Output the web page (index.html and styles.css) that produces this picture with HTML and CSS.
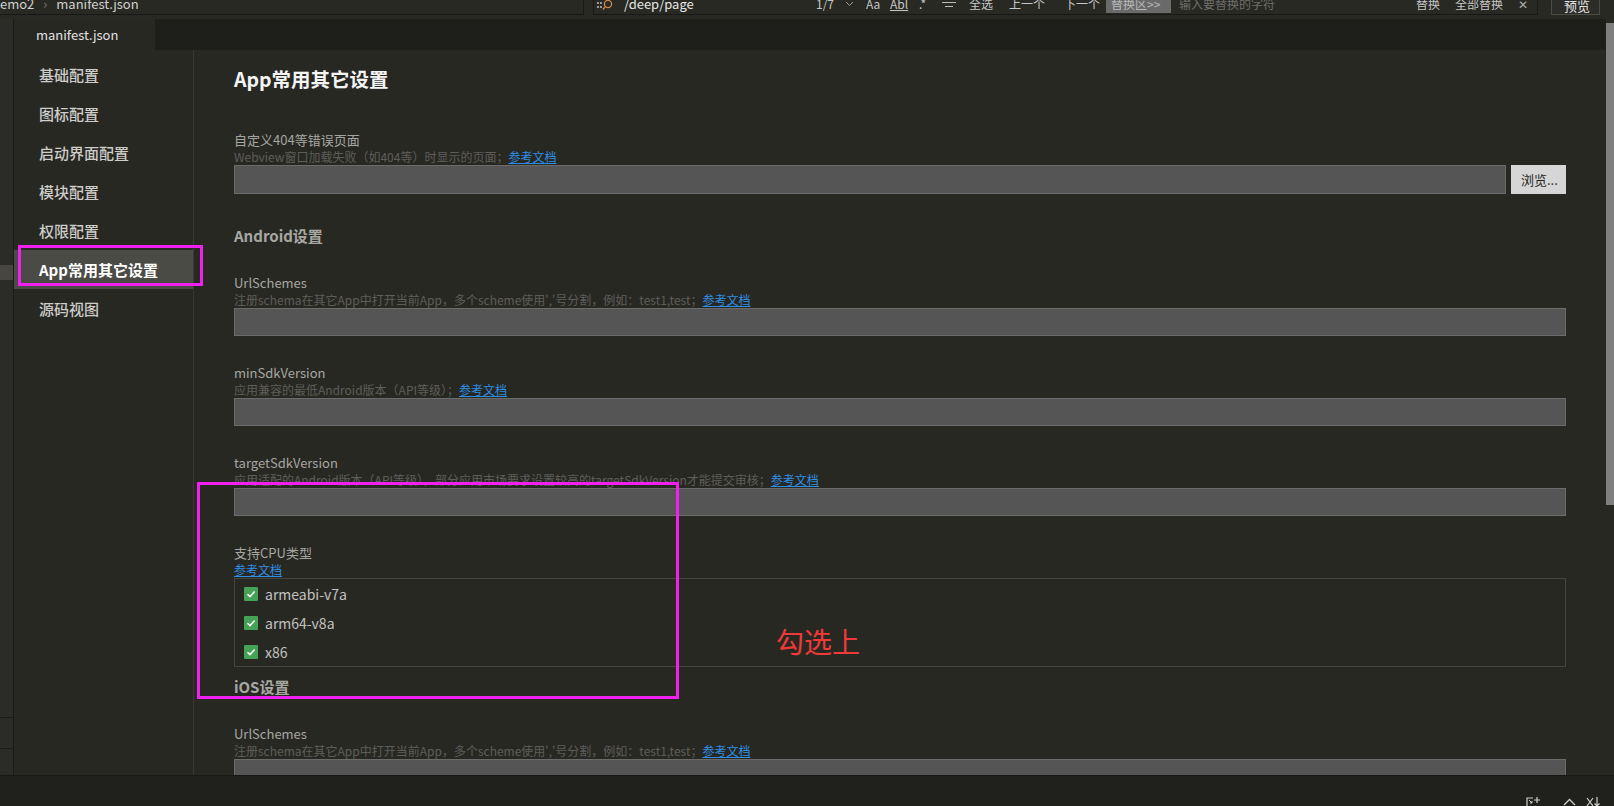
FILE: index.html
```html
<!DOCTYPE html>
<html lang="zh-CN">
<head>
<meta charset="utf-8">
<title>manifest.json</title>
<link rel="stylesheet" href="styles.css">
</head>
<body>
<div class="app">
  <header class="topbar">
    <div class="crumbs"><span>emo2</span><span class="sep">›</span><span>manifest.json</span></div>
    <div class="find">
      <svg class="find-ico" width="17" height="12" viewBox="0 0 17 12"><g fill="#9a9a9a"><rect x="0" y="3" width="2" height="2"/><rect x="3" y="3" width="2" height="2"/><rect x="0" y="7" width="2" height="2"/><rect x="3" y="7" width="2" height="2"/></g><circle cx="11" cy="5" r="3.6" fill="none" stroke="#d0884a" stroke-width="1.3"/><path d="M8.4 7.6 L6 10.5" stroke="#d0884a" stroke-width="1.4"/></svg>
      <span class="find-text">/deep/page</span>
      <span class="tool w29">1/7</span>
      <span class="tool w21"><svg width="9" height="6" viewBox="0 0 9 6"><path d="M1 1 L4.5 4.5 L8 1" fill="none" stroke="#999" stroke-width="1"/></svg></span>
      <span class="tool w24">Aa</span>
      <span class="tool w29 abl">Abl</span>
      <span class="tool w23">.*</span>
      <span class="tool w27"><svg width="14" height="10" viewBox="0 0 14 10"><path d="M0 3.5 H14 M3 7.5 H11" stroke="#bbb" stroke-width="1.2"/></svg></span>
      <span class="tool w40">全选</span>
      <span class="tool w55">上一个</span>
      <span class="tool w42">下一个</span>
      <span class="replace-tag">替换区&gt;&gt;</span>
      <span class="placeholder">输入要替换的字符</span>
      <span class="tool w39">替换</span>
      <span class="tool w63">全部替换</span>
      <span class="tool close">✕</span>
    </div>
    <div class="preview">预览</div>
  </header>

  <div class="main">
    <div class="rail">
      <div class="rail-top"></div>
      <div class="rail-hl"></div>
      <div class="rail-fill"></div>
      <div class="rail-cell"></div>
      <div class="rail-end"></div>
    </div>
    <div class="editor">
      <div class="editor-main">
        <div class="tabs"><div class="tab">manifest.json</div></div>
        <div class="panel">
          <nav class="side">
            <div class="side-item">基础配置</div>
            <div class="side-item">图标配置</div>
            <div class="side-item">启动界面配置</div>
            <div class="side-item">模块配置</div>
            <div class="side-item">权限配置</div>
            <div class="side-item active">App常用其它设置</div>
            <div class="side-item">源码视图</div>
          </nav>
          <section class="content">
            <h1 class="title">App常用其它设置</h1>

            <div class="field">
              <div class="label">自定义404等错误页面</div>
              <div class="hint">Webview窗口加载失败（如404等）时显示的页面；<a>参考文档</a></div>
              <div class="input-row">
                <div class="input tall"></div>
                <div class="browse">浏览...</div>
              </div>
            </div>

            <h2 class="section">Android设置</h2>

            <div class="field">
              <div class="label">UrlSchemes</div>
              <div class="hint">注册schema在其它App中打开当前App，多个scheme使用','号分割，例如：test1,test；<a>参考文档</a></div>
              <div class="input"></div>
            </div>

            <div class="field">
              <div class="label">minSdkVersion</div>
              <div class="hint">应用兼容的最低Android版本（API等级）；<a>参考文档</a></div>
              <div class="input"></div>
            </div>

            <div class="field">
              <div class="label">targetSdkVersion</div>
              <div class="hint">应用适配的Android版本（API等级），部分应用市场要求设置较高的targetSdkVersion才能提交审核；<a>参考文档</a></div>
              <div class="input"></div>
            </div>

            <div class="field">
              <div class="label">支持CPU类型</div>
              <div class="hint"><a>参考文档</a></div>
              <div class="cpu-box">
                <div class="cpu-item"><span class="check"><svg width="14" height="14" viewBox="0 0 14 14"><path d="M3.5 7.2 L6 9.6 L10.6 4.6" fill="none" stroke="#fff" stroke-width="1.5"/></svg></span>armeabi-v7a</div>
                <div class="cpu-item"><span class="check"><svg width="14" height="14" viewBox="0 0 14 14"><path d="M3.5 7.2 L6 9.6 L10.6 4.6" fill="none" stroke="#fff" stroke-width="1.5"/></svg></span>arm64-v8a</div>
                <div class="cpu-item"><span class="check"><svg width="14" height="14" viewBox="0 0 14 14"><path d="M3.5 7.2 L6 9.6 L10.6 4.6" fill="none" stroke="#fff" stroke-width="1.5"/></svg></span>x86</div>
              </div>
            </div>

            <h2 class="section ios">iOS设置</h2>

            <div class="field">
              <div class="label">UrlSchemes</div>
              <div class="hint">注册schema在其它App中打开当前App，多个scheme使用','号分割，例如：test1,test；<a>参考文档</a></div>
              <div class="input"></div>
            </div>
          </section>
        </div>
      </div>
      <div class="scroll"><div class="thumb"></div></div>
    </div>
  </div>

  <footer class="status">
    <svg class="st-ico" width="15" height="12" viewBox="0 0 15 12"><path d="M1 12 V1 H7" fill="none" stroke="#cfcfcf" stroke-width="1.2"/><path d="M11 0 V6 M8 3 H14" stroke="#cfcfcf" stroke-width="1.2"/><path d="M3 3 L6 6 M6 4 V6 H4" fill="none" stroke="#cfcfcf" stroke-width="1"/></svg>
    <svg class="st-ico" width="13" height="12" viewBox="0 0 13 12"><path d="M1 8 L6.5 2.5 L12 8" fill="none" stroke="#cfcfcf" stroke-width="1.3"/></svg>
    <svg class="st-ico" width="15" height="12" viewBox="0 0 15 12"><path d="M1 1 L7 9 M7 1 L1 9" stroke="#cfcfcf" stroke-width="1.2"/><path d="M11 0 V9 M8.5 6.5 L11 9 L13.5 6.5" fill="none" stroke="#cfcfcf" stroke-width="1.2"/></svg>
  </footer>

  <div class="mark mark-nav"></div>
  <div class="mark mark-cpu"></div>
  <div class="note">勾选上</div>
</div>
</body>
</html>
```

FILE: styles.css
```css
html, body {
  margin: 0;
  padding: 0;
  background: #282823;
  overflow: hidden;
}
body {
  font-family: "Noto Sans CJK SC", "Noto Sans", sans-serif;
}
.app {
  position: relative;
  width: 1614px;
  height: 806px;
  display: flex;
  flex-direction: column;
}

/* ---------- top bar ---------- */
.topbar {
  flex: none;
  height: 19px;
  display: flex;
  align-items: flex-start;
  background: #282923;
  color: #c9c9c9;
  font-size: 12px;
}
.crumbs {
  flex: none;
  width: 583px;
  height: 14px;
  border-right: 1px solid #181916;
  border-bottom: 1px solid #181916;
  display: flex;
  align-items: flex-end;
  overflow: hidden;
  font-size: 13px;
  line-height: 18px;
  color: #d0d0d0;
}
.crumbs span {
  margin-bottom: 1px;
}
.crumbs .sep {
  color: #777;
  margin: 0 9px 1px 9px;
}
.find {
  flex: none;
  margin-left: 9px;
  width: 943px;
  height: 14px;
  border-left: 1px solid #181916;
  border-right: 1px solid #181916;
  border-bottom: 1px solid #181916;
  display: flex;
  align-items: flex-end;
  overflow: hidden;
  line-height: 18px;
}
.find > * {
  flex: none;
  margin-bottom: 1px;
}
.find-ico {
  margin-left: 3px;
  margin-bottom: 3px !important;
}
.find-text {
  margin-left: 10px;
  width: 192px;
  font-size: 13px;
  color: #e6e6e6;
}
.tool {
  display: inline-flex;
  align-items: center;
  height: 18px;
  color: #c6c6c6;
}
.w21 { width: 21px; }
.w23 { width: 23px; }
.w24 { width: 24px; }
.w27 { width: 27px; }
.w29 { width: 29px; }
.w39 { width: 39px; }
.w40 { width: 40px; }
.w42 { width: 42px; }
.w55 { width: 55px; }
.w63 { width: 63px; }
.abl {
  text-decoration: underline;
}
.replace-tag {
  width: 65px;
  height: 18px;
  background: #6a6a6a;
  color: #b9b9b9;
  box-sizing: border-box;
  padding-left: 5px;
}
.placeholder {
  margin-left: 8px;
  width: 237px;
  color: #6e6e6a;
}
.close {
  width: 12px;
  font-size: 12px;
  color: #aaa;
}
.preview {
  flex: none;
  margin-left: 13px;
  width: 49px;
  height: 15px;
  box-sizing: border-box;
  border: 1px solid #4c4c47;
  border-top: none;
  background: #2c2d28;
  color: #e4e4e4;
  font-size: 13px;
  line-height: 11px;
  padding-left: 12px;
  overflow: hidden;
}

/* ---------- main ---------- */
.main {
  flex: 1;
  min-height: 0;
  display: flex;
}
.rail {
  flex: none;
  width: 13px;
  border-right: 1px solid #1b1b18;
  background: #2b2c27;
  display: flex;
  flex-direction: column;
}
.rail-top { height: 246px; flex: none; }
.rail-hl { height: 15px; flex: none; background: #47473f; }
.rail-fill { flex: 1; }
.rail-cell {
  flex: none;
  height: 32px;
  box-sizing: border-box;
  border-top: 1px solid #1b1b18;
  border-bottom: 1px solid #1b1b18;
}
.rail-end { flex: none; height: 26px; }

.editor {
  flex: 1;
  min-width: 0;
  display: flex;
}
.editor-main {
  flex: 1;
  min-width: 0;
  display: flex;
  flex-direction: column;
}
.tabs {
  flex: none;
  height: 31px;
  display: flex;
  background: #1e1f1b;
}
.tab {
  width: 141px;
  box-sizing: border-box;
  padding-left: 22px;
  background: #282823;
  color: #e2e2e2;
  font-size: 13px;
  line-height: 31px;
}
.panel {
  flex: 1;
  min-height: 0;
  display: flex;
}

/* ---------- sidebar ---------- */
.side {
  flex: none;
  width: 179px;
  border-right: 1px solid #3a3a35;
  padding-top: 5px;
}
.side-item {
  height: 39px;
  line-height: 39px;
  padding-left: 25px;
  font-size: 15px;
  font-weight: 500;
  color: #cdcdca;
  white-space: nowrap;
}
.side-item.active {
  background: #4b4b46;
  color: #ffffff;
  font-weight: bold;
}

/* ---------- content ---------- */
.content {
  flex: 1;
  min-width: 0;
  padding: 15px 40px 0 40px;
  overflow: hidden;
}
.title {
  margin: 0 0 38px 0;
  font-size: 19.5px;
  line-height: 28px;
  font-weight: bold;
  color: #f4f4f4;
}
.field {
  margin-top: 28px;
}
.label {
  font-size: 13px;
  line-height: 17px;
  color: #a6a6a1;
  white-space: nowrap;
}
.hint {
  font-size: 12px;
  line-height: 17px;
  color: #5e5e59;
  white-space: nowrap;
}
.hint a {
  color: #2f8fe6;
  text-decoration: underline;
}
.input {
  height: 28px;
  box-sizing: border-box;
  background: #555555;
  border: 1px solid #6b6b6b;
}
.input-row {
  display: flex;
  gap: 5px;
}
.input.tall {
  flex: 1;
  height: 29px;
}
.browse {
  flex: none;
  width: 55px;
  height: 29px;
  background: #d6d6d6;
  color: #1e1e1e;
  font-size: 13px;
  line-height: 29px;
  box-sizing: border-box;
  padding-left: 10px;
}
.section {
  margin: 32px 0 0 0;
  font-size: 15px;
  line-height: 20px;
  font-weight: bold;
  color: #a8a8a3;
}
.section.ios {
  margin-top: 10px;
}
.cpu-box {
  height: 89px;
  box-sizing: border-box;
  border: 1px solid #45453f;
}
.cpu-item {
  height: 29px;
  display: flex;
  align-items: center;
  padding-left: 9px;
  font-size: 14px;
  color: #c2c2c0;
}
.check {
  width: 14px;
  height: 14px;
  margin-right: 7px;
  background: #45a257;
  border-radius: 1px;
  display: flex;
}

.scroll {
  flex: none;
  width: 8px;
  padding-top: 4px;
  background: #282823;
}
.thumb {
  height: 482px;
  background: #7f7f7f;
}

/* ---------- status bar ---------- */
.status {
  flex: none;
  height: 31px;
  box-sizing: border-box;
  border-top: 1px solid #171815;
  background: #20211d;
  display: flex;
  align-items: flex-start;
  padding: 21px 0 0 1526px;
}
.st-ico { flex: none; }
.st-ico:nth-child(2) { margin-left: 22px; }
.st-ico:nth-child(3) { margin-left: 10px; }

/* ---------- annotations ---------- */
.mark {
  position: absolute;
  box-sizing: border-box;
  border: 3px solid #f020f0;
}
.mark-nav {
  left: 18px;
  top: 245px;
  width: 185px;
  height: 41px;
}
.mark-cpu {
  left: 197px;
  top: 482px;
  width: 482px;
  height: 217px;
}
.note {
  position: absolute;
  left: 776px;
  top: 621px;
  font-size: 28px;
  line-height: 40px;
  color: #f03a3a;
}
```
